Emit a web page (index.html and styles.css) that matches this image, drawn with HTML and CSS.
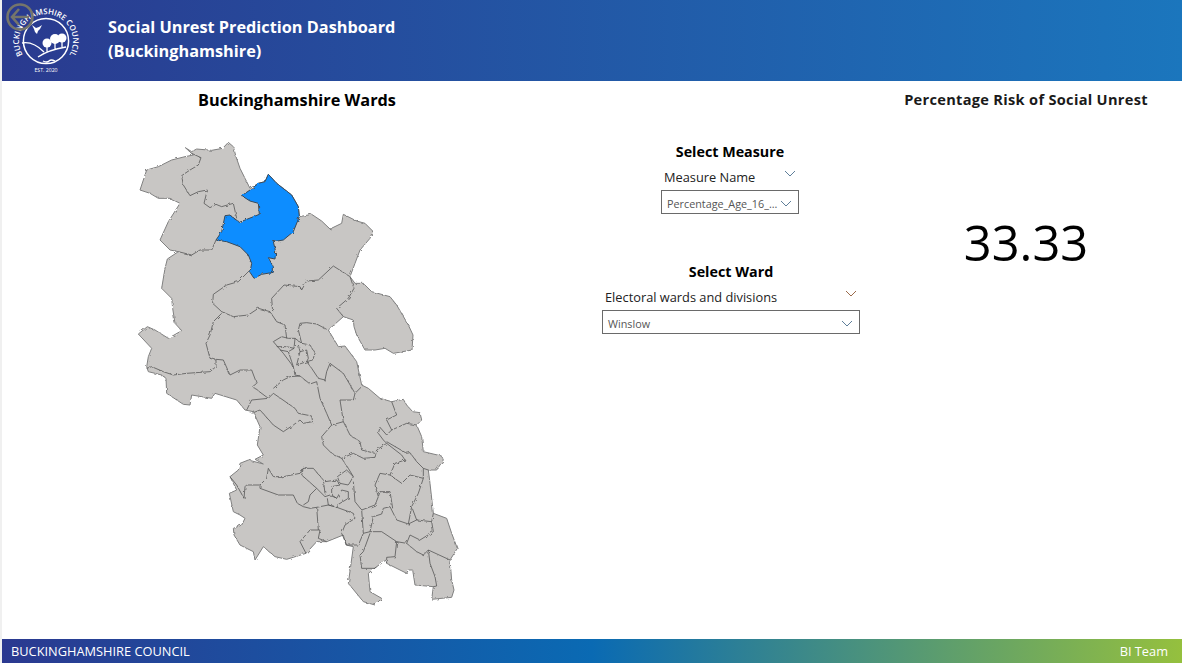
FILE: index.html
```html
<!DOCTYPE html>
<html lang="en">
<head>
    <meta charset="UTF-8">
    <meta name="viewport" content="width=device-width, initial-scale=1.0">
    <title>Social Unrest Prediction Dashboard</title>
    <link rel="stylesheet" href="styles.css">
</head>
<body>
    <div class="page">
        <header class="top-bar">
            <svg class="logo" viewBox="0 0 76 76" aria-hidden="true">
                <defs>
                    <path id="logoArc" d="M14.500 51.500A27 27 0 1 1 61.500 51.500"/>
                </defs>
                <circle class="logo-ring" cx="38" cy="38" r="22.6"/>
                <text class="logo-text"><textPath href="#logoArc" startOffset="50%" text-anchor="middle">BUCKINGHAMSHIRE COUNCIL</textPath></text>
                <text class="logo-est" x="38" y="69" text-anchor="middle">EST. 2020</text>
                <path class="logo-fill" d="M24 22l4 3 3-1 3-2-2 4-2 2-1 3-2-2-1-3z"/>
                <circle class="logo-fill" cx="39" cy="40" r="4.5"/>
                <circle class="logo-fill" cx="47" cy="36" r="5"/>
                <circle class="logo-fill" cx="54" cy="35" r="4.5"/>
                <path class="logo-line" d="M14 40q11-2 22 9M30 54q10-7 28-10M39 43v6M47 40v6M54 38v6M35 58q4 2 6 0 2-2 6 0"/>
            </svg>
            <h1 class="title">Social Unrest Prediction Dashboard<br>(Buckinghamshire)</h1>
            <svg class="back-btn" viewBox="0 0 28 28" aria-hidden="true">
                <circle cx="14" cy="14" r="12.5"/>
                <path d="M13 6l-7 8 7 8M6 14h17"/>
            </svg>
        </header>

        <main class="content">
            <section class="map-col">
                <h2 class="map-title">Buckinghamshire Wards</h2>
                <svg class="ward-map" viewBox="0 0 1020 1425" aria-label="Map of Buckinghamshire wards">
                    <defs>
                        <filter id="rough" x="-2%" y="-2%" width="104%" height="104%">
                            <feTurbulence type="fractalNoise" baseFrequency="0.09" numOctaves="2" seed="4"/>
                            <feDisplacementMap in="SourceGraphic" scale="9"/>
                        </filter>
                    </defs>
                    <g filter="url(#rough)">
                    <path class="land" d="M166 38 185 50 200 42 245 46 278 40 295 22 310 35 318 65 330 100 345 130 360 160 385 145 405 140 415 118 440 145 485 180 505 215 508 245 545 238 575 258 600 282 635 265 640 238 680 258 705 265 728 288 720 310 690 345 675 385 660 425 675 445 700 445 725 470 780 485 800 510 835 570 849 600 846 645 790 655 765 640 735 645 705 645 680 600 672 575 670 555 640 545 595 585 625 635 645 633 680 680 695 750 715 760 750 790 785 800 820 793 830 810 848 830 870 833 875 855 860 870 875 905 880 950 935 963 940 975 920 1005 895 1005 900 1045 910 1135 950 1150 965 1195 982 1240 960 1275 965 1335 972 1365 965 1387 905 1393 910 1355 855 1350 848 1305 835 1305 830 1315 770 1285 768 1275 740 1295 715 1315 720 1370 755 1390 735 1410 700 1400 655 1345 670 1235 648 1230 640 1200 590 1220 560 1220 528 1255 470 1273 435 1265 400 1235 375 1275 370 1250 330 1230 312 1200 310 1180 335 1170 345 1150 330 1140 310 1130 298 1075 320 1065 300 1025 325 1005 330 985 355 975 400 987 375 973 400 960 382 930 390 875 370 830 345 825 320 795 255 775 245 790 185 780 180 810 160 808 110 775 108 730 95 720 55 710 50 695 55 665 65 640 25 597 52 575 75 585 115 610 155 587 135 565 128 520 125 490 95 460 105 400 112 372 145 350 120 345 90 315 115 260 150 205 120 190 85 190 60 175 30 165 50 105 85 95 125 75 165 65 190 60 166 38Z"/>
                    <g class="borders">
                        <polyline points="213,68 205,90 180,105 155,122 160,150 180,182 205,170 232,165 222,205 240,218 258,208 275,215 310,205 320,250"/>
                        <polyline points="185,55 213,68"/>
                        <polyline points="258,315 245,345 210,345 185,360 145,350"/>
                        <polyline points="360,405 345,420 325,440 290,450 250,478 248,505 275,530 310,545 355,540 385,520 420,530 440,560 465,570 470,610"/>
                        <polyline points="428,530 425,490 462,450 510,455 515,465 530,438 565,435 610,393 660,425 672,460 655,490 620,520 640,545"/>
                    </g>
                    <g class="borders" transform="translate(0 525)">
                        <polyline points="50,175 65,170 100,185 130,195 170,190 240,185 258,170 258,150 240,145 228,100 240,75 250,35 275,10"/>
                        <polyline points="258,148 280,150 300,195 330,180 365,180 380,220 368,230 415,265 365,270 350,300"/>
                        <polyline points="415,265 430,250 495,295 505,310 545,318 548,335 520,340 510,330 490,345 460,365 430,345 390,300 365,310"/>
                        <polyline points="430,235 460,210 480,200 510,198 540,222 560,215 570,265 590,310 605,345"/>
                        <polyline points="675,250 640,190 600,160 590,185 585,210 565,205 545,175 530,155"/>
                        <polyline points="430,95 455,80 475,85 495,85 515,100 540,105 555,130 548,150 530,155"/>
                        <polyline points="430,95 460,130 475,150 490,170 495,195 510,198"/>
                        <polyline points="495,85 492,115 475,125 485,155 490,170"/>
                        <polyline points="440,110 470,110 492,115"/>
                        <polyline points="450,120 475,125"/>
                        <polyline points="505,105 510,125 530,120 535,145 530,155 500,165 510,125"/>
                        <polyline points="515,100 505,60 510,40 530,38 560,42 590,58"/>
                    </g>
                    <g class="borders" transform="translate(270 705)">
                        <polyline points="335,165 305,200 310,225 335,250 365,265 400,250 430,265 465,262 470,240 500,220 545,255 555,270"/>
                        <polyline points="335,165 370,155 360,90 400,90 405,70 425,50"/>
                        <polyline points="370,155 390,195 420,215 425,240 465,250"/>
                        <polyline points="515,95 530,135 500,150 515,180 560,160 590,165"/>
                        <polyline points="515,180 500,195 480,172 475,190 490,210 500,220"/>
                        <polyline points="500,215 560,250 570,248 590,275 610,295 625,300"/>
                        <polyline points="555,270 525,280 510,315 545,340 570,315 610,325 610,295"/>
                        <polyline points="510,315 480,310 465,345 475,380 480,365 510,365 518,415"/>
                        <polyline points="365,265 385,295 400,320 380,300 352,320 360,340 385,345 400,320"/>
                        <polyline points="400,335 405,395 425,420 465,405 475,380"/>
                        <polyline points="145,295 160,320 190,320 240,310 250,295 280,295 310,330 315,370"/>
                        <polyline points="145,295 140,325 120,345 80,345 75,350 72,385 50,345 30,320"/>
                        <polyline points="120,345 120,355 175,375 220,375 232,400 250,410 270,415 290,412 325,405 345,410 400,430 405,445 375,465 365,490 380,525 415,525 430,490"/>
                        <polyline points="250,295 245,315 290,355 315,380 330,375 350,385"/>
                        <polyline points="290,355 270,375 265,395 250,405"/>
                        <polyline points="315,335 350,330 360,345 335,350 335,375 350,385 365,360 385,365 385,385 360,400 345,410 325,405 322,385"/>
                        <polyline points="290,412 295,480 270,480 240,515 258,550"/>
                        <polyline points="295,480 300,480 295,505 320,515"/>
                        <polyline points="425,420 430,490 450,485 460,440 485,432 490,415 510,410 530,450 565,462 590,450 635,455 640,430"/>
                        <polyline points="450,485 485,485 530,515 560,520 570,495 600,510 640,485 635,455"/>
                        <polyline points="530,515 525,560 500,562 500,580"/>
                        <polyline points="450,490 430,545 420,555 425,595 465,595 470,590"/>
                        <polyline points="560,520 590,545 610,555 625,540 630,580 645,620 650,648 640,650"/>
                        <polyline points="625,540 690,570"/>
                        <polyline points="610,325 595,370 575,410 590,450"/>
                        <polyline points="565,462 575,410"/>
                    </g>
                    <path class="ward-selected" d="M415 118 440 145 485 180 505 215 508 245 490 290 460 315 430 320 437 350 435 372 415 368 430 395 430 412 395 418 372 430 360 412 365 385 355 360 330 335 290 320 258 315 275 290 285 242 300 240 328 262 388 238 385 205 360 198 335 182 360 165 385 145 405 140Z"/>
                    </g>
                </svg>
            </section>

            <section class="filter-col">
                <div class="slicer slicer-measure">
                    <h3 class="slicer-title">Select Measure</h3>
                    <div class="slicer-head">
                        <span>Measure Name</span>
                        <svg class="chevron" viewBox="0 0 12 7"><polyline points="1,1 6,6 11,1"/></svg>
                    </div>
                    <div class="dropdown">
                        <span class="dropdown-value">Percentage_Age_16_...</span>
                        <svg class="chevron" viewBox="0 0 12 7"><polyline points="1,1 6,6 11,1"/></svg>
                    </div>
                </div>
                <div class="slicer slicer-ward">
                    <h3 class="slicer-title">Select Ward</h3>
                    <div class="slicer-head">
                        <span>Electoral wards and divisions</span>
                        <svg class="chevron chevron-warm" viewBox="0 0 12 7"><polyline points="1,1 6,6 11,1"/></svg>
                    </div>
                    <div class="dropdown">
                        <span class="dropdown-value">Winslow</span>
                        <svg class="chevron" viewBox="0 0 12 7"><polyline points="1,1 6,6 11,1"/></svg>
                    </div>
                </div>
            </section>

            <section class="kpi-col">
                <h2 class="kpi-title">Percentage Risk of Social Unrest</h2>
                <div class="kpi-value">33.33</div>
            </section>
        </main>

        <footer class="bottom-bar">
            <span>BUCKINGHAMSHIRE COUNCIL</span>
            <span>BI Team</span>
        </footer>
    </div>
</body>
</html>
```

FILE: styles.css
```css
html, body {
    margin: 0;
    height: 100%;
}
body {
    background: #f0f0f0;
    font-family: "Open Sans", "Noto Sans", sans-serif;
    color: #000;
    overflow: hidden;
}
.page {
    display: flex;
    flex-direction: column;
    height: 663px;
    margin-left: 2px;
    background: #fff;
}

/* header */
.top-bar {
    position: relative;
    display: flex;
    align-items: center;
    gap: 24px;
    height: 81px;
    flex: none;
    padding-left: 6px;
    background: linear-gradient(90deg, #2a3a8f 0%, #1b76bd 100%);
}
.logo {
    width: 76px;
    height: 76px;
    flex: none;
}
.logo-ring {
    fill: none;
    stroke: #fff;
    stroke-width: 1.5;
}
.logo-text {
    fill: #fff;
    font-size: 7.9px;
    font-weight: 600;
}
.logo-est {
    fill: #fff;
    font-size: 5.2px;
}
.logo-fill {
    fill: #fff;
}
.logo-line {
    fill: none;
    stroke: #fff;
    stroke-width: 1.3;
}
.title {
    margin: 0 0 4px;
    color: #fff;
    font-size: 16.3px;
    font-weight: 700;
    line-height: 24px;
}
.back-btn {
    position: absolute;
    left: 4px;
    top: 3px;
    width: 28px;
    height: 28px;
    fill: none;
    stroke: #75756b;
    stroke-width: 2.6;
}

/* main area */
.content {
    flex: 1;
    display: flex;
    min-height: 0;
}
.map-col {
    width: 590px;
    flex: none;
}
.map-title {
    margin: 8px 0 0;
    text-align: center;
    font-size: 16.3px;
    font-weight: 700;
    line-height: 22px;
}
.ward-map {
    display: block;
    width: 340px;
    height: 475px;
    margin: 24px 0 0 128px;
}
.land {
    fill: #c8c6c4;
    stroke: #808080;
    stroke-width: 3;
    stroke-linejoin: round;
}
.borders polyline {
    fill: none;
    stroke: #555;
    stroke-width: 2.4;
    stroke-linejoin: round;
}
.ward-selected {
    fill: #118dff;
    stroke: #3a4a58;
    stroke-width: 3;
    stroke-linejoin: round;
}

/* slicers */
.filter-col {
    width: 278px;
    flex: none;
    padding-top: 60px;
}
.slicer-measure {
    width: 138px;
    margin-left: 69px;
}
.slicer-ward {
    width: 258px;
    margin: 47px 0 0 10px;
}
.slicer-title {
    margin: 0 0 2px;
    text-align: center;
    font-size: 14.3px;
    font-weight: 700;
    line-height: 22px;
    white-space: nowrap;
}
.slicer-head {
    display: flex;
    justify-content: space-between;
    align-items: center;
    height: 24px;
    padding: 0 3px;
    font-size: 12.8px;
    color: #222;
    white-space: nowrap;
}
.slicer-head .chevron {
    align-self: flex-start;
    margin-top: 5px;
}
.dropdown {
    display: flex;
    justify-content: space-between;
    align-items: center;
    height: 24px;
    margin-top: 1px;
    padding: 2px 6px 0 5px;
    box-sizing: border-box;
    border: 1px solid #6a6a6a;
    font-size: 10.8px;
    color: #555;
    white-space: nowrap;
}
.chevron {
    width: 12px;
    height: 7px;
    flex: none;
    fill: none;
    stroke: #5f7f9a;
    stroke-width: 1;
}
.chevron-warm {
    stroke: #9a6a4a;
}

/* kpi */
.kpi-col {
    flex: 1;
    text-align: center;
}
.kpi-title {
    margin: 7px 0 0;
    font-size: 14.6px;
    font-weight: 700;
    letter-spacing: .3px;
    line-height: 22px;
    color: #1a1a1a;
}
.kpi-value {
    margin-top: 100px;
    font-size: 48.8px;
    line-height: 64px;
}

/* footer */
.bottom-bar {
    display: flex;
    justify-content: space-between;
    align-items: center;
    height: 24px;
    flex: none;
    padding: 0 14px 0 9px;
    color: #fff;
    font-size: 12.8px;
    background: linear-gradient(90deg, #2b3990 0%, #0a6ab3 50%, #95c03e 100%);
}
```
